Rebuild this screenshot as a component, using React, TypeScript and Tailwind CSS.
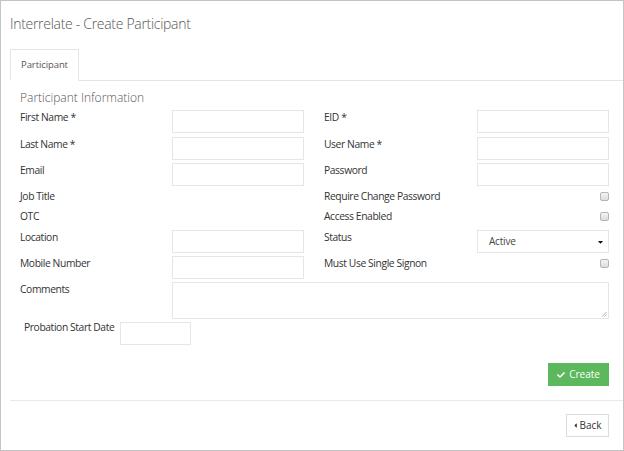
import React from 'react';
import { FaCheck, FaCaretLeft, FaCaretDown } from 'react-icons/fa';

const font = { fontFamily: '"Open Sans", "Liberation Sans", sans-serif' };

const Input = ({ className = '' }: { className?: string }) => (
  <div className={`h-[23px] w-[132px] border border-[#e6e6e6] bg-white ${className}`} />
);

const Check = () => (
  <div className="mt-[3px] h-[9px] w-[9px] rounded-[2px] border border-[#b5b5b5] bg-gradient-to-b from-[#f4f4f4] to-[#dcdcdc]" />
);

const Label = ({ children, className = '' }: { children: React.ReactNode; className?: string }) => (
  <div className={`text-[10.3px] leading-[14px] tracking-[-0.4px] text-[#333] ${className}`}>{children}</div>
);

type Cell = { label: string; kind: 'input' | 'check' | 'select' | 'none' };

const rows: { h: string; left: Cell; right?: Cell }[] = [
  { h: 'h-[27px]', left: { label: 'First Name *', kind: 'input' }, right: { label: 'EID *', kind: 'input' } },
  { h: 'h-[26px]', left: { label: 'Last Name *', kind: 'input' }, right: { label: 'User Name *', kind: 'input' } },
  { h: 'h-[26px]', left: { label: 'Email', kind: 'input' }, right: { label: 'Password', kind: 'input' } },
  { h: 'h-[20px]', left: { label: 'Job Title', kind: 'none' }, right: { label: 'Require Change Password', kind: 'check' } },
  { h: 'h-[21px]', left: { label: 'OTC', kind: 'none' }, right: { label: 'Access Enabled', kind: 'check' } },
  { h: 'h-[26px]', left: { label: 'Location', kind: 'input' }, right: { label: 'Status', kind: 'select' } },
  { h: 'h-[26px]', left: { label: 'Mobile Number', kind: 'input' }, right: { label: 'Must Use Single Signon', kind: 'check' } },
];

const Field = ({ cell, right }: { cell: Cell; right?: boolean }) => (
  <div className={`flex items-start ${right ? 'w-[285px]' : 'w-[284px]'}`}>
    <div className={right ? 'w-[153px]' : 'w-[152px]'}>
      <Label>{cell.label}</Label>
    </div>
    {cell.kind === 'input' && <Input />}
    {cell.kind === 'check' && (
      <div className="flex w-[132px] justify-end">
        <Check />
      </div>
    )}
    {cell.kind === 'select' && (
      <div className="flex h-[23px] w-[132px] items-center justify-between border border-[#e6e6e6] bg-white pl-[11px] pr-[4px]">
        <span className="text-[10px] tracking-[-0.2px] text-[#444]">Active</span>
        <FaCaretDown className="h-[8px] w-[7px] text-[#111]" />
      </div>
    )}
  </div>
);

export default function App() {
  return (
    <div style={font} className="h-[451px] w-[624px] overflow-hidden bg-white">
      <div className="h-full w-full border border-[#c4c4c4] pl-[9px]">
        <h1 className="pt-[12px] text-[14px] font-light leading-[22px] tracking-[-0.3px] text-[#555]">
          Interrelate - Create Participant
        </h1>

        {/* Tabs */}
        <div className="mt-[14px] flex h-[32px] items-end border-b border-[#e4e4e4]">
          <div className="-mb-px flex h-[32px] w-[69px] items-center justify-center border border-b-white border-[#e4e4e4] bg-white">
            <span className="text-[9.5px] tracking-[-0.1px] text-[#555]">Participant</span>
          </div>
        </div>

        <div className="pl-[10px] pr-[14px]">
          <h2 className="mt-[8px] text-[12px] font-light leading-[18px] text-[#555]">Participant Information</h2>

          <div className="mt-[3px]">
            {rows.map((r, i) => (
              <div key={i} className={`flex gap-[20px] ${r.h}`}>
                <Field cell={r.left} />
                {r.right && <Field cell={r.right} right />}
              </div>
            ))}

            <div className="flex h-[40px] items-start">
              <div className="w-[152px]">
                <Label>Comments</Label>
              </div>
              <div className="relative h-[37px] w-[437px] border border-[#e6e6e6] bg-white">
                <svg className="absolute bottom-[1px] right-[1px]" width="6" height="6" viewBox="0 0 6 6">
                  <path d="M5.5 1 L1 5.5 M5.5 3.5 L3.5 5.5" stroke="#999" strokeWidth="0.8" />
                </svg>
              </div>
            </div>

            <div className="flex items-start gap-[6px] pl-[4px]">
              <Label className="-mt-[2px]">Probation Start Date</Label>
              <div className="h-[23px] w-[71px] border border-[#e6e6e6] bg-white" />
            </div>
          </div>

          <div className="mt-[18px] flex justify-end">
            <button className="flex h-[23px] w-[61px] items-center justify-center gap-[4px] bg-[#5cb85c] text-[10px] text-white">
              <FaCheck className="h-[8px] w-[8px]" />
              Create
            </button>
          </div>
        </div>

        <div className="mt-[14px] border-t border-[#e9e9e9]" />

        <div className="mt-[13px] flex justify-end pr-[14px]">
          <button className="flex h-[23px] w-[43px] items-center justify-center gap-[1px] border border-[#dcdcdc] bg-white text-[10px] text-[#333]">
            <FaCaretLeft className="h-[7px] w-[5px]" />
            Back
          </button>
        </div>
      </div>
    </div>
  );
}
